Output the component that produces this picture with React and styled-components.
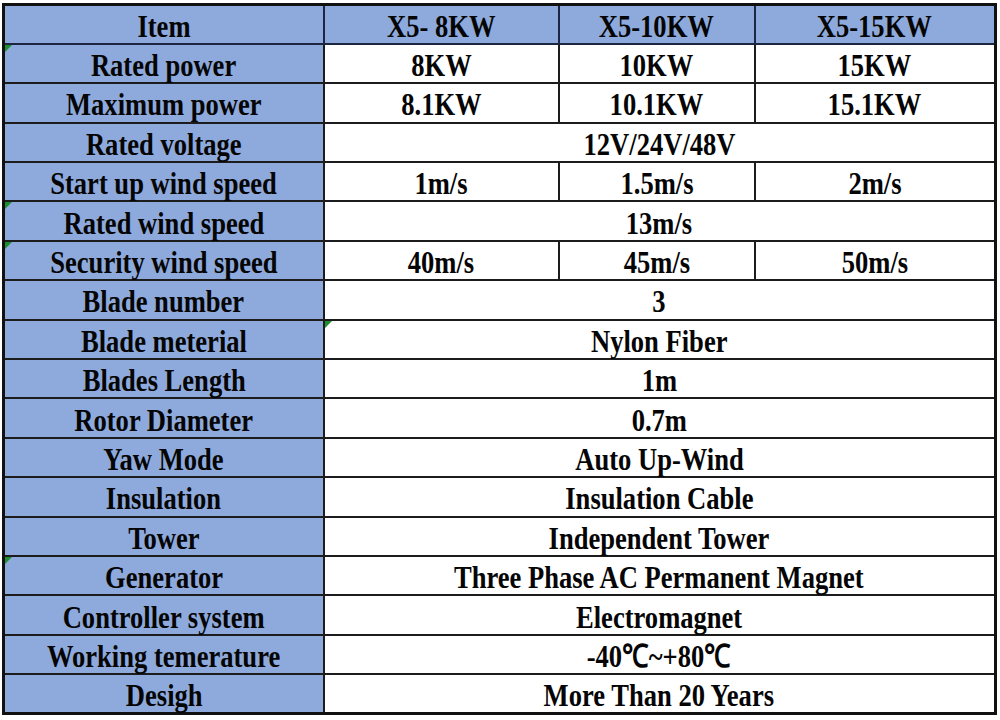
import styled, { createGlobalStyle } from "styled-components";

const GlobalStyle = createGlobalStyle`
  html, body {
    margin: 0;
    padding: 0;
    background: #ffffff;
  }
  body {
    font-family: "Liberation Serif", "Times New Roman", serif;
  }
`;

const rows = [
  { label: "Rated power", values: ["8KW", "10KW", "15KW"], flag: true },
  { label: "Maximum power", values: ["8.1KW", "10.1KW", "15.1KW"] },
  { label: "Rated voltage", values: ["12V/24V/48V"] },
  { label: "Start up wind speed", values: ["1m/s", "1.5m/s", "2m/s"] },
  { label: "Rated wind speed", values: ["13m/s"], flag: true },
  { label: "Security wind speed", values: ["40m/s", "45m/s", "50m/s"], flag: true },
  { label: "Blade number", values: ["3"] },
  { label: "Blade meterial", values: ["Nylon Fiber"], valueFlag: true },
  { label: "Blades Length", values: ["1m"] },
  { label: "Rotor Diameter", values: ["0.7m"] },
  { label: "Yaw Mode", values: ["Auto Up-Wind"] },
  { label: "Insulation", values: ["Insulation Cable"] },
  { label: "Tower", values: ["Independent Tower"] },
  { label: "Generator", values: ["Three Phase AC Permanent Magnet"], flag: true },
  { label: "Controller system", values: ["Electromagnet"] },
  { label: "Working temerature", values: ["-40℃~+80℃"] },
  { label: "Desigh", values: ["More Than 20 Years"] },
];

export default function App() {
  return (
    <Page>
      <GlobalStyle />
      <SpecTable>
        <colgroup>
          <Col $w={320} />
          <Col $w={235} />
          <Col $w={196} />
          <Col $w={241} />
        </colgroup>
        <tbody>
          <Row>
            <HeadCell>
              <Text>Item</Text>
            </HeadCell>
            <HeadCell>
              <Text>X5- 8KW</Text>
            </HeadCell>
            <HeadCell>
              <Text>X5-10KW</Text>
            </HeadCell>
            <HeadCell>
              <Text>X5-15KW</Text>
            </HeadCell>
          </Row>
          {rows.map((row) => (
            <Row key={row.label}>
              <LabelCell $flag={row.flag}>
                <Text>{row.label}</Text>
              </LabelCell>
              {row.values.length === 1 ? (
                <ValueCell colSpan={3} $flag={row.valueFlag}>
                  <Text>{row.values[0]}</Text>
                </ValueCell>
              ) : (
                row.values.map((v) => (
                  <ValueCell key={v}>
                    <Text>{v}</Text>
                  </ValueCell>
                ))
              )}
            </Row>
          ))}
        </tbody>
      </SpecTable>
    </Page>
  );
}

const Page = styled.div`
  width: 1000px;
  height: 720px;
  padding: 3px 0 0 2px;
  box-sizing: border-box;
  background: #ffffff;
  overflow: hidden;
`;

const SpecTable = styled.table`
  width: 992px;
  table-layout: fixed;
  border-collapse: collapse;
  border: 3px solid #111;
`;

const Col = styled.col`
  width: ${(p) => p.$w}px;
`;

const Row = styled.tr`
  height: 39.4px;
`;

const Cell = styled.td`
  position: relative;
  padding: 3px 0 0;
  text-align: center;
  vertical-align: middle;
  border: 2px solid #1c1c1c;
  color: #050505;
  font-weight: 700;
  font-size: 32px;
  line-height: 1;
  white-space: nowrap;

  /* excel comment marker */
  &::before {
    content: "";
    display: ${(p) => (p.$flag ? "block" : "none")};
    position: absolute;
    top: 0;
    left: 0;
    border-top: 7px solid #1e8f2e;
    border-right: 7px solid transparent;
  }
`;

const HeadCell = styled(Cell)`
  background: #8eaadc;
  border-color: #1d2640;
`;

const LabelCell = styled(Cell)`
  background: #8eaadc;
`;

const ValueCell = styled(Cell)`
  background: #ffffff;
`;

const Text = styled.span`
  display: inline-block;
  transform: scaleX(0.83);
`;
